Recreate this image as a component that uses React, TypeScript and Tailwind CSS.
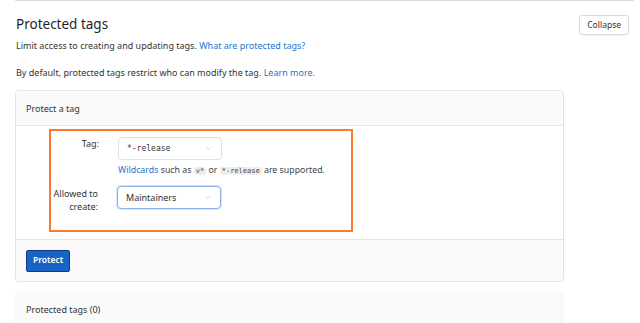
import { ChevronDown } from 'lucide-react';

function Select({ value, mono, focused }: { value: string; mono?: boolean; focused?: boolean }) {
    return (
        <div
            className={
                'flex items-center justify-between h-[23px] w-[104px] px-2 rounded-[4px] bg-white border ' +
                (focused ? 'border-[#8fb3e6] shadow-[0_0_0_1px_#d6e4f7]' : 'border-[#e1e1e1]')
            }
        >
            <span
                className={
                    mono
                        ? "text-[8px] text-[#333] font-['DejaVu_Sans_Mono',monospace]"
                        : 'text-[9px] text-[#303030]'
                }
            >
                {value}
            </span>
            <ChevronDown className="w-[9px] h-[9px] text-[#b5b5b5]" strokeWidth={1.5} />
        </div>
    );
}

export default function App() {
    return (
        <div className="w-[640px] h-[323px] overflow-hidden bg-white font-['Noto_Sans',sans-serif] text-[#2e2e2e]">
            <div className="ml-[15px] w-[619px] border-t border-[#dcdcdc]">
                {/* Header */}
                <div className="flex justify-between items-start">
                    <div className="pt-[14px] pl-px">
                        <h1 className="text-[13.5px] leading-[18px] font-normal text-[#1f1f1f]">Protected tags</h1>
                        <p className="mt-[6px] text-[9px] leading-[13px] text-[#333]">
                            Limit access to creating and updating tags.{' '}
                            <span className="text-[#1f75cb]">What are protected tags?</span>
                        </p>
                        <p className="mt-[14px] text-[9px] leading-[13px] text-[#333]">
                            By default, protected tags restrict who can modify the tag.{' '}
                            <span className="text-[#1f75cb]">Learn more.</span>
                        </p>
                    </div>
                    <button className="mt-[14px] mr-[5px] h-[20px] px-[7px] rounded-[3px] border border-[#dadada] bg-white text-[8.5px] text-[#333] shadow-[0_1px_1px_rgba(0,0,0,0.05)]">
                        Collapse
                    </button>
                </div>

                {/* Protect a tag card */}
                <div className="mt-[11px] w-[549px] rounded-[4px] border border-[#e3e3e3] overflow-hidden">
                    <div className="h-[35px] flex items-center px-[10px] pt-[2px] bg-[#fafafa] border-b border-[#e3e3e3] text-[9px] text-[#333]">
                        Protect a tag
                    </div>
                    <div className="bg-white pt-[3px] pb-[7px] pl-[33px]">
                        <div className="w-[304px] h-[103px] border-2 border-[#fc7a2f] pt-[6px]">
                            <div className="flex">
                                <div className="w-[48px] text-right text-[9px] leading-[12px] pt-[1px] text-[#333]">Tag:</div>
                                <div className="ml-[19px]">
                                    <Select value="*-release" mono />
                                    <p className="mt-[4px] text-[8.8px] leading-[12px] text-[#444] whitespace-nowrap">
                                        <span className="text-[#1f75cb]">Wildcards</span> such as{' '}
                                        <code className="px-[2px] rounded-[2px] bg-[#eeeeee] text-[7px] font-['DejaVu_Sans_Mono',monospace]">
                                            v*
                                        </code>{' '}
                                        or{' '}
                                        <code className="px-[2px] rounded-[2px] bg-[#eeeeee] text-[7px] font-['DejaVu_Sans_Mono',monospace]">
                                            *-release
                                        </code>{' '}
                                        are supported.
                                    </p>
                                </div>
                            </div>
                            <div className="flex mt-[9px]">
                                <div className="w-[47px] text-right text-[9px] leading-[13px] pt-[1px] text-[#333]">
                                    Allowed to
                                    <br />
                                    create:
                                </div>
                                <div className="ml-[19px]">
                                    <div className="w-[106px]">
                                        <Select value="Maintainers" focused />
                                    </div>
                                </div>
                            </div>
                        </div>
                    </div>
                    <div className="h-[42px] flex items-center px-[10px] bg-[#fafafa] border-t border-[#e3e3e3]">
                        <button className="h-[22px] px-[6px] rounded-[2px] bg-[#1864c4] border border-[#0d3f85] text-white text-[8.5px] font-semibold">
                            Protect
                        </button>
                    </div>
                </div>

                {/* Protected tags list */}
                <div className="mt-[10px] w-[549px] h-[40px] bg-[#fafafb] px-[11px] pt-[11px] text-[9px] text-[#333]">
                    Protected tags (0)
                </div>
            </div>
        </div>
    );
}
